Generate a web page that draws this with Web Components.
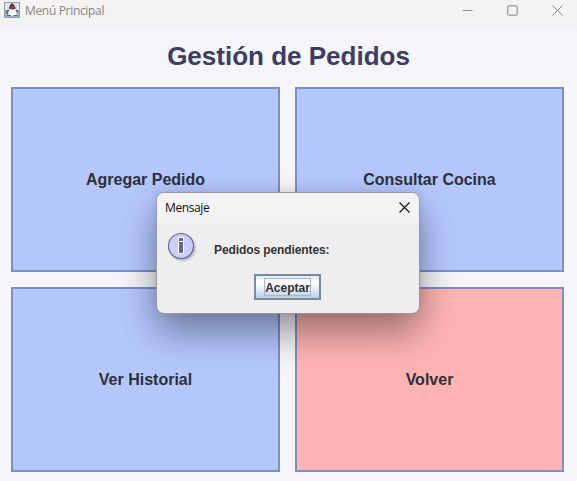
<!DOCTYPE html>
<html lang="es">
<head>
<meta charset="utf-8">
<title>Menú Principal</title>
<style>
html,body{margin:0;height:100%;overflow:hidden}
body{font-family:"Liberation Sans",Arial,sans-serif}
</style>
</head>
<body>
<app-window></app-window>
<script>
class BaseElement extends HTMLElement {
  constructor(){
    super();
    this.attachShadow({mode:'open'}).innerHTML = this.constructor.markup;
  }
}

customElements.define('window-bar', class extends BaseElement {
  static markup = `<style>
    :host{display:flex;align-items:center;height:26px;box-sizing:border-box;padding:0 14.5px 5px 4px;background:#f3f3f3;color:#868686;
      font:12px "Open Sans","Noto Sans",sans-serif;letter-spacing:-.33px}
    svg{display:block;flex:none}
    .java{margin:-1px 5px 0 0}
    .t{flex:1;white-space:nowrap}
    .controls{display:flex;gap:34px;margin-top:-1px}
  </style>
  <svg class="java" width="16" height="16" viewBox="0 0 16 16">
    <rect x=".5" y=".5" width="15" height="15" fill="#dfe8ee" stroke="#8fa1b0"/>
    <path d="M1 8h14v7H1z" fill="#9fb2c0"/>
    <path d="M7.500 1Q10.500 2 11.500 6L11.500 8H5V5.500Q6 3 7.500 1Z" fill="#39434d"/>
    <path d="M5 7L12 7L12.500 13Q8 14.500 4.500 13Z" fill="#fff"/>
    <path d="M5 8L2.500 9.500L3.500 12M12 8L14 10" stroke="#4a565f" stroke-width="1.300" fill="none"/>
    <ellipse cx="8.800" cy="5.800" rx="2.300" ry="2" fill="#b8302e"/>
    <path d="M3 13.500h4M9.500 13.500h3.500" stroke="#59656e"/>
  </svg>
  <span class="t"><slot></slot></span>
  <div class="controls">
    <svg width="11" height="11"><path d="M.5 5.500h10" stroke="#929292"/></svg>
    <svg width="11" height="11"><rect x=".8" y=".8" width="9.400" height="9.400" rx="1" fill="none" stroke="#858585"/></svg>
    <svg width="11" height="11"><path d="M.5.500l10 10M10.500.500l-10 10" stroke="#858585"/></svg>
  </div>`;
});

customElements.define('menu-button', class extends BaseElement {
  static markup = `<style>
    :host{display:flex;align-items:center;justify-content:center;box-sizing:border-box;border:2px solid #7b8fc4;
      background:var(--fill,#b4c7ff);color:#2d3039;font-weight:bold;font-size:16px}
    span{white-space:nowrap}
  </style><span><slot></slot></span>`;
});

customElements.define('info-icon', class extends BaseElement {
  static markup = `<style>:host{display:block;width:32px;height:32px}svg{display:block}</style>
  <svg width="32" height="32" viewBox="0 0 32 32">
    <defs><filter id="b" x="-30%" y="-30%" width="160%" height="160%"><feGaussianBlur stdDeviation="1.300"/></filter></defs>
    <circle cx="15.500" cy="16" r="12.800" fill="#858585" opacity=".6" filter="url(#b)"/>
    <circle cx="14" cy="14" r="12.500" fill="#ccccff" stroke="#666699" stroke-width="1.200"/>
    <path d="M11 5h6v5h-6zM11 9h6v13h-6z" fill="#fff"/>
    <path d="M12 6h4v3h-4zM12 10h4v11h-4z" fill="#666699"/>
  </svg>`;
});

customElements.define('metal-button', class extends BaseElement {
  static markup = `<style>
    :host{display:flex;align-items:center;justify-content:center;width:67px;height:26px;box-sizing:border-box;
      border:2px solid #7a8a99;background:linear-gradient(#dce9f3,#fff 28%,#fff 34%,#b8cfe5);font-weight:bold;font-size:12px;color:#333}
    span{box-sizing:border-box;width:47px;height:18px;line-height:18px;text-align:center;border:1px solid #a3b8cc;display:flex;justify-content:center}
  </style><span><slot></slot></span>`;
});

customElements.define('message-dialog', class extends BaseElement {
  static markup = `<style>
    :host{display:flex;flex-direction:column;box-sizing:border-box;width:264px;height:122px;border:1px solid #9698a0;border-radius:8px;
      background:#eee;background-clip:border-box;overflow:hidden;box-shadow:0 18px 38px rgba(0,0,0,.4),0 0 10px rgba(0,0,0,.08)}
    header{display:flex;align-items:center;justify-content:space-between;height:30px;padding:0 9.5px 0 8px;background:#f3f3f3;
      font:12px/30px "Open Sans","Noto Sans",sans-serif;letter-spacing:-.4px;color:#111}
    header svg{margin-top:-2px}
    .body{display:flex;padding:9px 0 0 10px;height:42px;box-sizing:border-box;gap:15px}
    .msg{font-size:12px;font-weight:bold;color:#333;line-height:16px;padding-top:10px;white-space:nowrap;letter-spacing:-.1px}
    footer{display:flex;justify-content:center;padding-top:9px;padding-right:1px}
  </style>
  <header><span><slot name="title"></slot></span>
    <svg width="11" height="11"><path d="M.5.500l10 10M10.500.500l-10 10" stroke="#111" stroke-width="1.100"/></svg></header>
  <div class="body"><info-icon></info-icon><div class="msg"><slot></slot></div></div>
  <footer><metal-button>Aceptar</metal-button></footer>`;
});

customElements.define('app-window', class extends BaseElement {
  static markup = `<style>
    :host{display:flex;flex-direction:column;width:577px;height:481px;background:#f5f5fa;position:relative;overflow:hidden}
    h1{margin:0;height:61px;line-height:60px;text-align:center;font-size:26px;color:#3c3c64;white-space:nowrap}
    main{display:grid;grid-template-columns:269px 269px;grid-template-rows:185px 185px;gap:15px;padding-left:11px}
    .danger{--fill:#ffb4b4}
    message-dialog{position:absolute;left:156px;top:192px}
  </style>
  <window-bar>Menú Principal</window-bar>
  <h1>Gestión de Pedidos</h1>
  <main>
    <menu-button>Agregar Pedido</menu-button>
    <menu-button>Consultar Cocina</menu-button>
    <menu-button>Ver Historial</menu-button>
    <menu-button class="danger">Volver</menu-button>
  </main>
  <message-dialog><span slot="title">Mensaje</span>Pedidos pendientes:</message-dialog>`;
});
</script>
</body>
</html>
